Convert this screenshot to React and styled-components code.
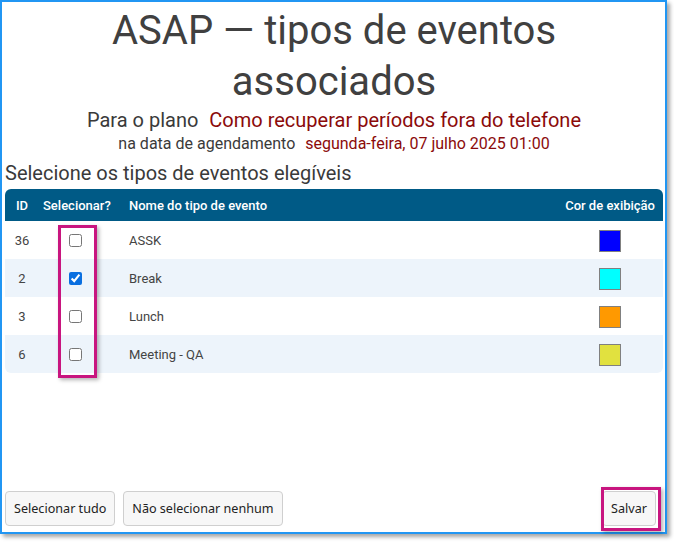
import React from "react";
import styled, { createGlobalStyle } from "styled-components";

const Global = createGlobalStyle`
  html, body { margin: 0; padding: 0; background: #ffffff; }
  body { font-family: Roboto, "Liberation Sans", sans-serif; }
  * { box-sizing: border-box; }
`;

const Stage = styled.div`
  width: 674px;
  height: 542px;
  padding: 0 7px 8px 0;
  background: #ffffff;
`;

const Window = styled.div`
  position: relative;
  width: 667px;
  height: 534px;
  border: 2px solid #2196f3;
  background: #ffffff;
  box-shadow: 3px 3px 4px rgba(0, 0, 0, 0.35);
  display: flex;
  flex-direction: column;
  padding: 3px 2px 6px 3px;
`;

const Title = styled.h1`
  margin: 0;
  font-family: Roboto, sans-serif;
  font-weight: 400;
  font-size: 40px;
  line-height: 51px;
  color: #404040;
  text-align: center;
`;

const SubLine = styled.div`
  margin-top: ${(p) => p.$mt || 0}px;
  text-align: center;
  font-size: ${(p) => p.$size}px;
  line-height: ${(p) => p.$lh}px;
  color: #3a3a3a;
`;

const Accent = styled.span`
  color: #8b0a0a;
  margin-left: 6px;
`;

const SectionTitle = styled.h2`
  margin: 7px 0 4px;
  font-weight: 400;
  font-size: 20px;
  line-height: 24px;
  color: #3a3a3a;
`;

const Table = styled.table`
  width: 658px;
  border-collapse: separate;
  border-spacing: 0;
  font-size: 13px;
`;

const Th = styled.th`
  height: 32px;
  padding: 0 ${(p) => p.$pad || 4}px;
  background: #005a86;
  color: #ffffff;
  font-weight: 500;
  white-space: nowrap;
  text-align: ${(p) => p.$align || "left"};
  width: ${(p) => p.$w || "auto"};
  &:first-child { border-top-left-radius: 6px; }
  &:last-child { border-top-right-radius: 6px; }
`;

const Tr = styled.tr`
  background: ${(p) => (p.$alt ? "#edf4fb" : "#ffffff")};
  &:last-child td:first-child { border-bottom-left-radius: 6px; }
  &:last-child td:last-child { border-bottom-right-radius: 6px; }
`;

const Td = styled.td`
  height: 38px;
  padding: 0 4px 0 ${(p) => p.$pl || 4}px;
  color: #444444;
  text-align: ${(p) => p.$align || "left"};
  vertical-align: middle;
`;

const Check = styled.input`
  width: 13px;
  height: 13px;
  margin: 4px 0 0 0;
  accent-color: #0a6fe0;
`;

const Swatch = styled.span`
  display: inline-block;
  width: 22px;
  height: 22px;
  margin-top: 4px;
  border: 1px solid #808080;
  background: ${(p) => p.$color};
`;

const Spacer = styled.div`
  flex: 1;
`;

const Footer = styled.div`
  display: flex;
  align-items: center;
  padding-right: 7px;
`;

const Button = styled.button`
  height: 35px;
  padding: 0 8px;
  margin-right: 8px;
  border: 1px solid #cfcfcf;
  border-radius: 4px;
  background: #f7f7f7;
  color: #222222;
  font-family: "Noto Sans", "Open Sans", sans-serif;
  font-size: 12.6px;
  &:last-child { margin-right: 0; margin-left: auto; }
`;

const Highlight = styled.div`
  position: absolute;
  border: 3px solid #c8157f;
  box-shadow: 2px 2px 4px rgba(0, 0, 0, 0.3);
  pointer-events: none;
`;

const rows = [
  { id: 36, name: "ASSK", checked: false, color: "#0000ff" },
  { id: 2, name: "Break", checked: true, color: "#00ffff" },
  { id: 3, name: "Lunch", checked: false, color: "#ff9900" },
  { id: 6, name: "Meeting - QA", checked: false, color: "#e1e13f" },
];

export default function App() {
  return (
    <Stage>
      <Global />
      <Window>
        <Title>
          ASAP — tipos de eventos
          <br />
          associados
        </Title>
        <SubLine $size={20} $lh={24} $mt={1}>
          Para o plano <Accent>Como recuperar períodos fora do telefone</Accent>
        </SubLine>
        <SubLine $size={16} $lh={21} $mt={1}>
          na data de agendamento <Accent>segunda-feira, 07 julho 2025 01:00</Accent>
        </SubLine>
        <SectionTitle>Selecione os tipos de eventos elegíveis</SectionTitle>
        <Table>
          <thead>
            <tr>
              <Th $align="center" $w="34px">ID</Th>
              <Th $w="86px">Selecionar?</Th>
              <Th>Nome do tipo de evento</Th>
              <Th $align="center" $pad={8} $w="1%">Cor de exibição</Th>
            </tr>
          </thead>
          <tbody>
            {rows.map((r, i) => (
              <Tr key={r.id} $alt={i % 2 === 1}>
                <Td $align="center">{r.id}</Td>
                <Td $pl={30}>
                  <Check type="checkbox" defaultChecked={r.checked} />
                </Td>
                <Td>{r.name}</Td>
                <Td $align="center">
                  <Swatch $color={r.color} />
                </Td>
              </Tr>
            ))}
          </tbody>
        </Table>
        <Spacer />
        <Footer>
          <Button>Selecionar tudo</Button>
          <Button>Não selecionar nenhum</Button>
          <Button>Salvar</Button>
        </Footer>
        <Highlight style={{ left: 56, top: 223, width: 39, height: 153 }} />
        <Highlight style={{ left: 599, top: 485, width: 60, height: 44 }} />
      </Window>
    </Stage>
  );
}
